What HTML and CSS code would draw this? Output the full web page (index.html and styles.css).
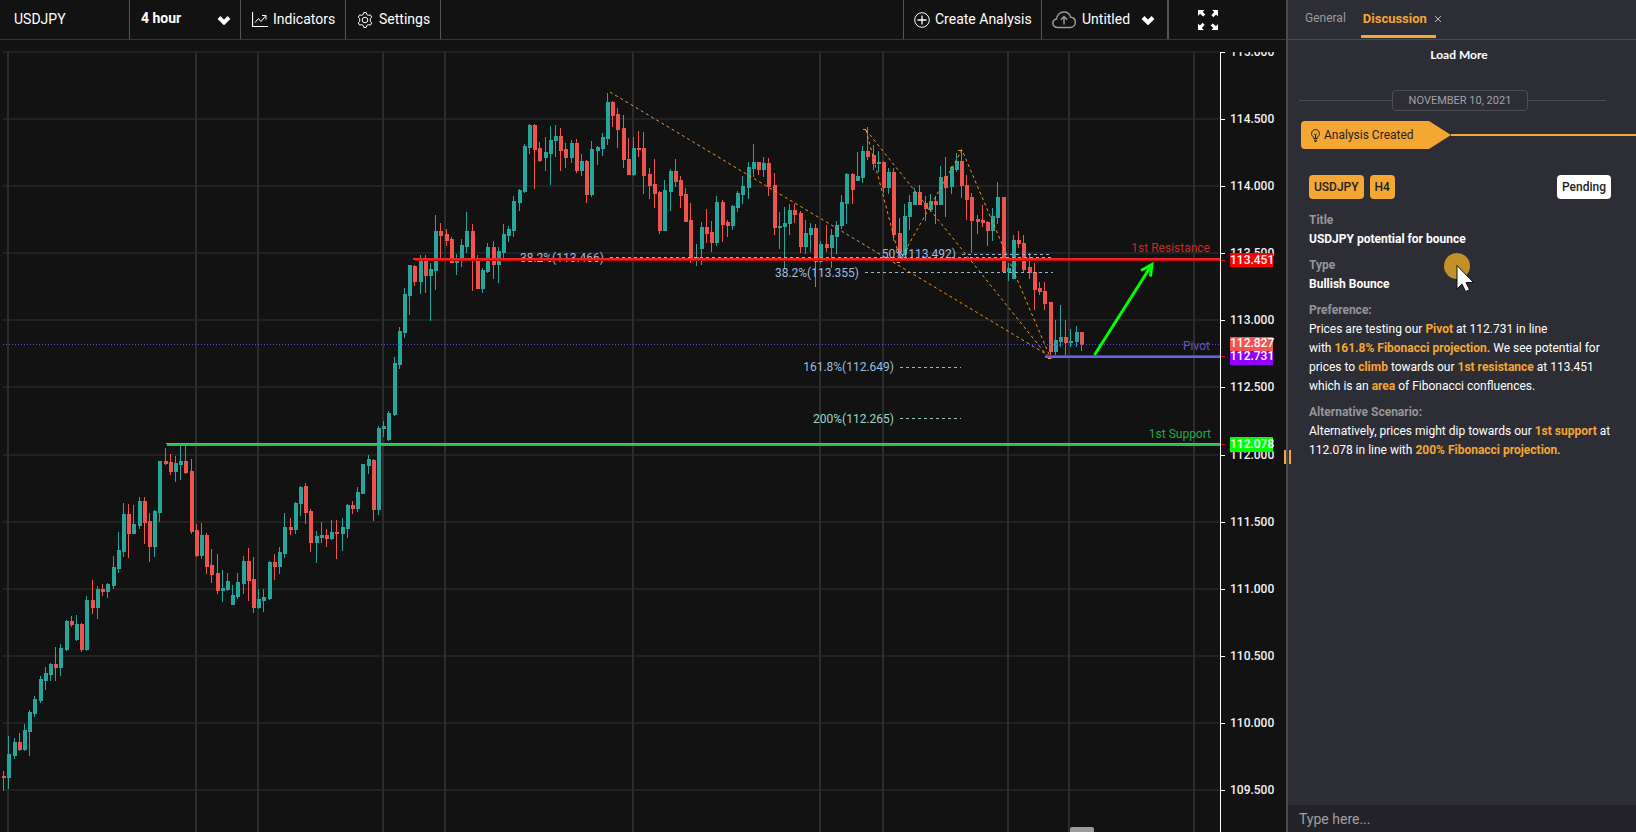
FILE: index.html
```html
<!DOCTYPE html>
<html lang="en">
<head>
<meta charset="utf-8">
<title>USDJPY</title>
<link rel="stylesheet" href="styles.css">
</head>
<body>
<div class="app">
  <main class="workspace">
    <header class="toolbar">
      <button class="tool symbol" type="button">USDJPY</button>
      <label class="tool timeframe">
        <select class="select" aria-label="Timeframe"><option>4 hour</option><option>1 day</option></select>
        <svg class="chevron" viewBox="0 0 14 10"><path d="M2 2.500 7 7.500 12 2.500"/></svg>
      </label>
      <button class="tool indicators" type="button">
        <svg class="icon" viewBox="0 0 16 16"><path d="M.5 0v14.500H16" stroke-width="1.200"/><path d="M3 10.500 6.500 6.500 9 9.500 14 3.500M10 3.500h4v4"/></svg>
        Indicators
      </button>
      <button class="tool settings" type="button">
        <svg class="icon" viewBox="0 0 16 16"><circle cx="8" cy="8" r="2.800"/><path d="M6.700.6h2.600l.5 2 1.500.8 2-.6 1.400 2.300-1.400 1.500v2.800l1.400 1.500-1.400 2.300-2-.6-1.500.8-.5 2H6.700l-.5-2-1.500-.8-2 .6L1.300 10.900l1.400-1.500V6.600L1.300 5.100l1.400-2.300 2 .6 1.500-.8z" stroke-linejoin="round"/></svg>
        Settings
      </button>
      <span class="spacer"></span>
      <button class="tool create" type="button">
        <svg class="icon" viewBox="0 0 16 16"><circle cx="8" cy="8" r="7.300"/><path d="M8 3.500v9M3.500 8h9" stroke-width="1.300"/></svg>
        Create Analysis
      </button>
      <button class="tool untitled" type="button">
        <svg class="cloud" viewBox="0 0 24 18"><path d="M6 16.500C2.800 16.500.8 14.800.8 12.300c0-2.300 1.500-3.900 3.800-4.300C4.900 3.800 8 1 11.800 1c3.400 0 6 2 6.900 5.200 2.800.2 4.600 2.300 4.600 5 0 3-2.200 5.300-5.300 5.300zM12 13.500v-8M8.800 8.700 12 5.500l3.200 3.200"/></svg>
        Untitled
        <svg class="chevron" viewBox="0 0 14 10"><path d="M2 2.500 7 7.500 12 2.500"/></svg>
      </button>
      <button class="tool expand" type="button" aria-label="Full screen">
        <svg class="arrows" viewBox="0 0 20 20"><path d="M0 0h6.500L4.700 1.800 7.300 4.400 5.200 6.500 2 3.800 0 6zM20 0v6.500l-1.900-1.900-2.700 2.700-2-2L16.200 2 14 0zM0 20v-6.500l1.900 1.900 2.700-2.700 2 2L3.800 18 6 20zM20 20h-6.500l1.900-1.900-2.700-2.700 2-2L18 16.200l2-2.200z"/></svg>
      </button>
    </header>
    <svg class="chart" viewBox="0 40 1286 792" preserveAspectRatio="xMaxYMin slice" role="img" aria-label="USDJPY 4 hour candlestick chart">
      <defs><clipPath id="plot"><rect x="0" y="52" width="1286" height="780"/></clipPath></defs>
      <g id="grid"></g>
      <g id="candles" shape-rendering="crispEdges"></g>
      <path class="last-price" d="M3 344.500H1220"/>
      <g class="trend">
        <path d="M610 92 1051 357"/>
        <path d="M866 130 1049 358"/>
        <path d="M866 130 900 260 962 150 1051 359"/>
        <path d="M863 129.500h6M958 150.500h6M897 262.500h6M1048 358.500h6"/>
      </g>
      <g class="fib-lines">
        <path d="M610 257.500H1051M865 272.500H1053M962 254.500H1049M900 367.500H961"/>
        <path class="teal" d="M900 418.500H961"/>
      </g>
      <g class="fib-text">
        <text x="604" y="262">38.2%(113.466)</text>
        <text x="859" y="277">38.2%(113.355)</text>
        <text x="956" y="258">50%(113.492)</text>
        <text x="894" y="371">161.8%(112.649)</text>
        <text class="teal" x="894" y="423">200%(112.265)</text>
      </g>
      <g shape-rendering="crispEdges">
        <rect x="413" y="258" width="807" height="2" fill="#ea2424"/><rect x="415" y="260" width="805" height="1" fill="#c60404"/>
        <rect x="166" y="443" width="1054" height="1" fill="#10f410"/><rect x="167" y="444" width="1053" height="2" fill="#24c248"/>
        <rect x="1045" y="355" width="175" height="1" fill="#7a1ce0"/><rect x="1045" y="356" width="175" height="2" fill="#6464e6"/>
      </g>
      <path class="arrow" d="M1094.500 355 1151 266M1141 270.500 1152 264.500 1150.500 276.500"/>
      <g class="level-text">
        <text x="1210" y="252" fill="#c62a2a">1st Resistance</text>
        <text x="1210" y="350" fill="#5a55c4">Pivot</text>
        <text x="1211" y="438" fill="#28a845">1st Support</text>
      </g>
      <g id="axis" class="axis" clip-path="url(#plot)"></g>
      <path d="M1070 832v-3q0-2 2-2h20q2 0 2 2v3z" fill="#9a9a9a"/>
    </svg>
  </main>

  <aside class="panel">
    <button class="resize" type="button" aria-label="Resize panel"></button>
    <nav class="tabs">
      <a class="tab" href="#general">General</a>
      <a class="tab active" href="#discussion">Discussion</a>
      <button class="close" type="button" aria-label="Close tab"><svg viewBox="0 0 8 8"><path d="M1 1 7 7M7 1 1 7"/></svg></button>
    </nav>
    <div class="feed">
      <button class="load" type="button">Load More</button>
      <div class="date"><span class="pill">NOVEMBER 10, 2021</span></div>
      <div class="event">
        <div class="ribbon">
          <svg class="bulb" viewBox="0 0 9 13"><path d="M2.800 9.500V8.300C1.300 7.500.6 6.200.6 4.600.6 2.200 2.200.6 4.500.6s3.900 1.600 3.900 4c0 1.600-.7 2.900-2.200 3.700v1.200zM3 11.200h3M3.500 12.500h2M4.500 9V5.500M3.200 4.800 4.500 6l1.300-1.200"/></svg>
          Analysis Created
        </div>
      </div>
      <article class="analysis">
        <div class="tags">
          <span class="tag">USDJPY</span><span class="tag">H4</span>
          <span class="status">Pending</span>
        </div>
        <h3 class="label">Title</h3>
        <p class="text strong">USDJPY potential for bounce</p>
        <h3 class="label">Type</h3>
        <p class="text strong">Bullish Bounce</p>
        <h3 class="label">Preference:</h3>
        <p class="text">Prices are testing our <b>Pivot</b> at 112.731 in line<br>with <b>161.8% Fibonacci projection.</b> We see potential for prices to <b>climb</b> towards our <b>1st resistance</b> at 113.451 which is an <b>area</b> of Fibonacci confluences.</p>
        <h3 class="label">Alternative Scenario:</h3>
        <p class="text">Alternatively, prices might dip towards our <b>1st support</b> at 112.078 in line with <b>200% Fibonacci projection</b>.</p>
      </article>
    </div>
    <input class="message" type="text" placeholder="Type here..." aria-label="Message">
    <svg class="pointer" viewBox="0 0 32 42"><circle cx="13" cy="14" r="13" fill="#c49127"/><path d="M13 13.500v23.500l5-5 3.500 7.500 4-1.700-3.500-7.300h7.500z" fill="#fff" stroke="#111" stroke-width="1"/></svg>
  </aside>
</div>
<script src="chart.js"></script>
</body>
</html>
```
FILE: styles.css
```css
* { box-sizing: border-box; }
body {
  margin: 0;
  background: #121212;
  color: #fff;
  font: 12px/19px Roboto, "Open Sans", sans-serif;
}
button, input, select { font: inherit; color: inherit; }
button { border: 0; padding: 0; background: none; cursor: pointer; }
svg { display: block; fill: none; flex: none; }

.app { display: flex; height: 100vh; overflow: hidden; }
.workspace { flex: 1; min-width: 0; display: flex; flex-direction: column; }

.toolbar { display: flex; height: 40px; flex: none; border-bottom: 1px solid #363636; }
.tool {
  display: flex;
  align-items: center;
  gap: 5px;
  padding: 0 0 0 11px;
  border-right: 1px solid #555;
  font-size: 14px;
  font-weight: 400;
  white-space: nowrap;
}
.symbol { width: 130px; padding-left: 14px; }
.timeframe { width: 111px; padding-right: 9px; }
.select { flex: 1; min-width: 0; appearance: none; border: 0; padding: 0 0 2px; background: none; font-weight: 700; }
.indicators { width: 105px; }
.settings { width: 95px; gap: 6px; }
.spacer { flex: 1; }
.create { width: 139px; padding-left: 10px; border-left: 1px solid #555; }
.untitled { width: 127px; padding-left: 10px; border-right: 2px solid #555; gap: 6px; }
.untitled .chevron { margin: 0 12px 0 auto; }
.expand { width: 117px; border-right: 0; padding-left: 29px; }
.icon { width: 16px; height: 16px; stroke: #fff; stroke-width: 1; }
.cloud { width: 24px; height: 18px; stroke: #999; stroke-width: 1.500; }
.chevron { width: 14px; height: 10px; stroke: #fff; stroke-width: 4; }
.arrows { width: 20px; height: 20px; fill: #fff; }

.chart { flex: 1; width: 100%; min-height: 0; }
.grid-v { fill: #2c2c2c; }
.grid-h { fill: #222; }
.up { fill: #26a69a; }
.down { fill: #ef5350; }
.last-price { stroke: #5a50d8; stroke-dasharray: 1 2; }
.trend path { stroke: #f0961c; stroke-dasharray: 3 3; }
.fib-lines path { stroke: #9ab4c8; stroke-dasharray: 3 3; }
.fib-lines .teal { stroke: #8cc8c0; }
.fib-text { fill: #9bbde0; text-anchor: end; }
.fib-text .teal { fill: #96d8cc; }
.level-text { text-anchor: end; }
.arrow { stroke: #00ff00; stroke-width: 3; }
.axis { fill: #f2f2f2; font-weight: 500; }
.axis-line { fill: #fff; }

.panel {
  position: relative;
  display: flex;
  flex-direction: column;
  width: 350px;
  flex: none;
  background: #2d2d35;
  border-left: 2px solid #4a4a50;
}
.resize {
  position: absolute;
  left: -4px;
  top: 450px;
  width: 7px;
  height: 14px;
  border: solid #f4a733;
  border-width: 0 2px;
}
.tabs { display: flex; height: 40px; flex: none; padding-left: 9px; border-bottom: 1px solid #4c4c52; }
.tab {
  height: 38px;
  padding: 9px 8px 0;
  color: #9c9c9e;
  text-decoration: none;
}
.tab.active { margin-left: 7px; padding: 9px 9px 0 2px; border-bottom: 3px solid #f4a733; color: #f4a733; font-size: 13px; font-weight: 700; }
.close { width: 8px; height: 38px; margin-left: -2px; stroke: #bbb; }
.close svg { width: 8px; height: 8px; }

.feed { flex: 1; min-height: 0; padding-left: 11px; }
.load { display: block; margin: 5px auto 0; padding-right: 17px; font: 700 12px/20px Lato, sans-serif; }
.date { display: flex; align-items: center; margin: 25px 30px 0 0; color: #a2a2a6; font-size: 11px; }
.date::before, .date::after { content: ""; flex: 1 1 93px; height: 1px; background: #4c4c52; }
.date::after { flex-basis: 78px; }
.pill { flex: none; padding: 0 16px; border: 1px solid #4c4c52; border-radius: 4px; }
.event { display: flex; align-items: center; margin: 10px 0 0 2px; }
.event::after { content: ""; flex: 1; height: 2px; background: #f4a733; }
.ribbon {
  display: flex;
  align-items: center;
  gap: 4px;
  height: 28px;
  width: 150px;
  padding-left: 10px;
  background: #f4a733;
  color: #1f1f22;
  border-radius: 4px 0 0 4px;
  clip-path: polygon(0 0, 128px 0, 100% 50%, 128px 100%, 0 100%);
}
.bulb { width: 9px; height: 13px; stroke: #1f1f22; }
.analysis { padding: 26px 25px 0 10px; }
.tags { display: flex; gap: 6px; margin-bottom: 12px; color: #1f1f22; font-weight: 500; }
.tag, .status { padding: 0 5px; border-radius: 4px; background: #f4a733; line-height: 24px; }
.status { margin-left: auto; background: #fff; }
.label { margin: 0; color: #96969a; font: inherit; font-weight: 700; }
.text { margin: 0 0 7px; }
.strong { font-weight: 700; }
.text b { color: #f4a733; }
.message { height: 27px; flex: none; border: 0; padding: 0 11px; background: #222228; font-size: 14px; outline: 0; }
.message::placeholder { color: #a0a0a4; opacity: 1; }
.pointer { position: absolute; left: 156px; top: 252px; width: 32px; height: 42px; }
```
FILE: chart.js
```js
// Each candle: direction, left edge, high, body top, body bottom, low.
const candles = `
d 2 771 776 778 791;u 7 736 754 778 789;u 13 738 742 756 759;d 18 733 742 750 751;u 23 724 730 750 751
u 28 710 712 732 756;u 33 696 699 714 717;u 39 676 679 701 703;u 44 667 673 681 690;u 49 663 664 675 681
d 54 647 664 668 681;u 59 644 648 668 676;u 65 620 621 650 651;d 70 616 621 625 627;u 75 615 624 640 641
d 80 623 624 650 652;u 85 596 600 650 651;d 91 580 600 608 614;u 96 586 589 608 619;d 101 584 589 592 596
u 106 583 584 592 598;u 112 556 567 586 589;u 117 532 550 569 573;u 122 503 514 552 557;d 127 504 514 534 558
u 132 505 524 534 534;u 138 497 501 526 529;d 143 497 501 523 544;d 148 513 521 547 562;u 153 510 511 547 557
u 158 461 461 513 522;d 164 448 461 464 465;d 169 454 462 472 475;u 174 456 463 472 482;u 179 446 461 465 480
d 184 446 461 473 474;d 190 459 471 532 534;d 195 524 530 556 557;u 200 523 535 556 559;d 205 533 535 567 574
d 210 549 565 575 583;d 216 554 573 591 594;u 221 570 588 591 602;u 226 573 581 590 591;u 231 585 595 605 605
u 236 573 582 597 599;u 242 556 561 584 594;d 247 548 561 581 601;d 252 557 579 608 613;u 257 589 599 608 609
u 262 589 597 601 612;u 268 561 562 599 600;d 273 554 562 567 580;u 278 547 552 567 574;u 283 513 527 554 558
d 289 518 527 530 535;u 294 502 503 530 534;u 299 486 487 504 516;d 304 483 486 513 524;d 309 509 511 543 552
u 315 531 536 543 563;u 320 522 535 538 543;d 325 529 535 539 547;u 330 520 532 539 540;d 335 520 532 534 559
u 341 518 527 534 551;u 346 504 505 529 538;d 351 501 505 509 514;u 356 487 492 509 512;u 361 464 464 494 494
u 367 455 459 466 474;d 372 459 460 510 521;u 377 426 428 510 515;u 382 421 426 429 437;u 387 411 413 440 441
u 393 357 363 415 416;u 398 327 331 365 369;u 403 288 294 333 338;u 408 265 265 296 315;d 413 265 266 282 286
u 419 255 260 282 294;d 424 255 260 276 293;u 429 263 269 276 321;u 434 215 231 271 290;d 439 223 231 236 258
d 445 229 234 241 246;d 450 237 239 263 263;u 455 254 258 263 275;u 460 239 245 258 267;u 465 212 231 247 253
d 471 224 231 261 291;d 476 255 258 289 289;u 481 268 270 289 293;u 486 243 247 272 273;d 492 241 247 265 279
u 497 247 251 265 283;u 502 224 234 253 258;u 507 226 229 236 242;u 512 196 201 231 237;u 518 189 190 203 211
u 523 144 146 192 193;u 528 124 125 148 154;d 533 124 125 150 189;d 538 142 148 161 162;u 544 137 152 158 171
u 549 126 140 154 185;u 554 125 136 141 157;d 559 128 136 151 171;d 564 143 149 158 168;u 570 140 143 158 163
d 575 139 143 171 173;u 580 154 161 171 176;d 585 160 161 195 203;u 590 141 149 195 197;u 596 146 147 151 165
u 601 133 137 149 156;u 606 93 102 139 145;d 611 101 102 116 127;d 616 108 114 130 148;d 622 115 128 160 168
d 627 138 159 175 175;u 632 137 148 175 176;d 637 131 148 150 157;d 642 132 148 176 194;d 648 168 174 186 199
d 653 159 184 194 208;d 658 191 192 231 234;u 663 180 190 231 231;u 669 169 171 192 211;d 674 159 171 182 187
d 679 176 180 196 208;d 684 188 194 222 222;d 689 203 220 258 263;u 695 244 257 258 266;u 700 222 227 249 265
d 705 209 227 234 243;d 710 221 232 243 252;u 715 196 202 243 246;d 721 200 202 225 242;d 726 220 222 226 237
u 731 205 206 226 230;u 736 191 193 208 212;u 741 176 186 195 204;u 747 162 167 188 199;u 752 144 162 169 177
d 757 162 162 170 175;u 762 157 163 170 177;d 767 158 163 187 196;d 773 173 185 228 235;u 778 212 226 228 249
u 783 207 223 227 269;u 788 204 210 224 235;d 793 204 210 215 223;d 799 211 213 247 253;u 804 220 233 247 254
u 809 223 228 235 252;d 814 224 228 262 287;u 819 241 244 262 263;d 825 225 244 248 252;u 830 229 235 248 268
u 835 221 225 237 254;u 840 195 202 226 229;u 845 173 174 204 224;d 851 173 174 190 204;u 856 152 176 181 181
u 861 146 151 178 183;d 866 127 151 157 160;d 872 145 155 164 170;u 877 151 162 164 172;d 882 161 162 188 193
u 887 168 172 188 194;d 892 168 172 235 241;d 898 218 233 254 259;u 903 204 216 255 255;u 908 195 202 217 230
u 913 188 192 205 205;d 918 185 192 205 205;d 924 196 203 209 221;u 929 194 201 210 212;d 934 196 201 205 224
u 939 166 177 205 205;d 944 157 176 188 217;u 950 166 167 187 194;u 955 153 161 170 172;d 960 149 161 186 198
d 965 175 185 200 220;d 970 193 197 221 253;d 976 215 219 222 234;d 981 205 220 223 227;d 986 221 222 231 246
u 991 208 216 231 241;u 996 182 197 218 224;d 1002 197 197 272 273;u 1007 263 268 272 281;u 1012 235 240 279 279
d 1017 231 240 244 248;d 1022 235 243 270 273;d 1028 253 267 273 279;d 1033 263 272 290 310;d 1038 282 288 292 295
d 1043 282 291 304 310;d 1049 302 302 352 357;u 1054 320 340 352 355;u 1059 305 337 342 347;d 1064 320 337 343 356
u 1069 329 341 343 347;u 1075 326 332 342 347;d 1080 332 332 345 351`.trim().split(/[;\n]/);

const rect = (x, y, w, h, cls) => `<rect x="${x}" y="${y}" width="${w}" height="${h}" class="${cls}"/>`;

document.getElementById('candles').innerHTML = candles.map(row => {
  const [dir, ...n] = row.trim().split(' ');
  const [x, high, top, bottom, low] = n.map(Number);
  const cls = dir === 'u' ? 'up' : 'down';
  return rect(x + 1, high, 1, low - high, cls) + rect(x, top, 4, Math.max(bottom - top, 1), cls);
}).join('');

const columns = [7, 195, 257, 382, 444, 632, 819, 882, 1007, 1068, 1193];
const rows = [52, 119, 186, 253, 320, 387, 455, 522, 589, 656, 723, 790];

document.getElementById('grid').innerHTML =
  rows.map(y => rect(3, y - 1, 1217, 2, 'grid-h')).join('') +
  columns.map(x => rect(x, 52, 2, 780, 'grid-v')).join('');

const tags = [
  [253, 14, '#ff0000', '113.451', 264],
  [351, 14, '#9400ff', '112.731', 360],
  [337, 14, '#f05552', '112.827', 347],
  [437, 15, '#00ff00', '112.078', 448]
];
document.getElementById('axis').innerHTML =
  rect(1220, 52, 1, 780, 'axis-line') +
  rows.map((y, i) => rect(1220, y, 5, 1, 'axis-line') +
    `<text x="1230" y="${y + 4}">${(115 - i / 2).toFixed(3)}</text>`).join('') +
  [260, 356, 444].map(y => `<rect x="1221" y="${y}" width="4" height="1" fill="#f00"/>`).join('') +
  tags.map(([y, h, color, text, base]) =>
    `<rect x="1230" y="${y}" width="43" height="${h}" fill="${color}"/><text x="1230" y="${base}" fill="#fff">${text}</text>`).join('');
```
